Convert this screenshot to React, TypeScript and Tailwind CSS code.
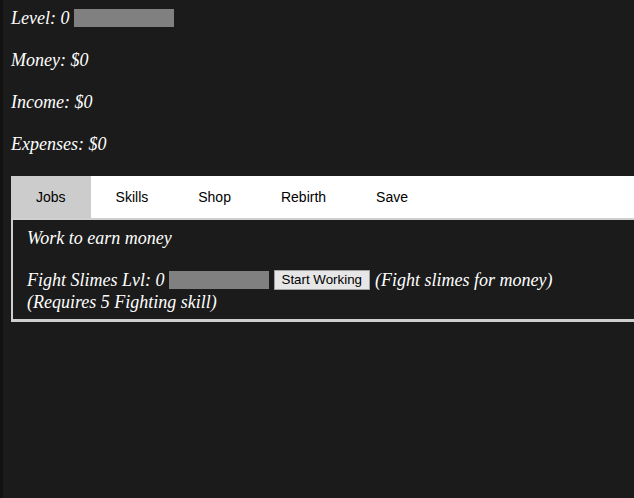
const serif = { fontFamily: '"Liberation Serif", "Times New Roman", serif' };

const tabs = ["Jobs", "Skills", "Shop", "Rebirth", "Save"];

function Stat({ label }: { label: string }) {
  return <div className="h-[24px] leading-[24px] italic">{label}</div>;
}

export default function App() {
  return (
    <div className="w-[634px] h-[498px] overflow-hidden bg-[#1b1b1b] flex text-white" style={serif}>
      <div className="w-[3px] shrink-0 bg-[#121212]" />
      <div className="flex flex-col pl-[8px] pt-[6px] text-[18px] w-[680px] shrink-0">
        <div className="flex flex-col gap-[18px]">
          <div className="flex items-center h-[24px] italic">
            <span>Level: 0</span>
            <div className="ml-[5px] w-[100px] h-[18px] bg-[#808080]" />
          </div>
          <Stat label="Money: $0" />
          <Stat label="Income: $0" />
          <Stat label="Expenses: $0" />
        </div>

        <div className="mt-[20px] flex flex-col">
          <div
            className="flex bg-white h-[44px] border-b-[2px] border-[#cfcfcf] text-[14px] text-black"
            style={{ fontFamily: '"Liberation Sans", Arial, sans-serif' }}
          >
            {tabs.map((t, i) => (
              <div
                key={t}
                className={
                  "flex items-center px-[25px] h-full " + (i === 0 ? "bg-[#cccccc]" : "")
                }
              >
                {t}
              </div>
            ))}
          </div>
          <div className="border-l-[2px] border-b-[3px] border-[#cfcfcf] bg-[#1b1b1b] pl-[14px] pt-[7px] pb-[6px] italic">
            <div className="h-[22px] leading-[22px]">Work to earn money</div>
            <div className="h-[20px]" />
            <div className="flex items-center h-[22px]">
              <span>Fight Slimes Lvl: 0</span>
              <div className="ml-[4px] w-[100px] h-[18px] bg-[#808080]" />
              <button
                className="ml-[5px] h-[20px] px-[7px] bg-[#e6e6e6] border border-[#a0a0a0] text-black text-[13.33px] not-italic leading-none"
                style={{ fontFamily: '"Liberation Sans", Arial, sans-serif' }}
              >
                Start Working
              </button>
              <span className="ml-[5px]">(Fight slimes for money)</span>
            </div>
            <div className="h-[22px] leading-[22px]">(Requires 5 Fighting skill)</div>
          </div>
        </div>
      </div>
    </div>
  );
}
